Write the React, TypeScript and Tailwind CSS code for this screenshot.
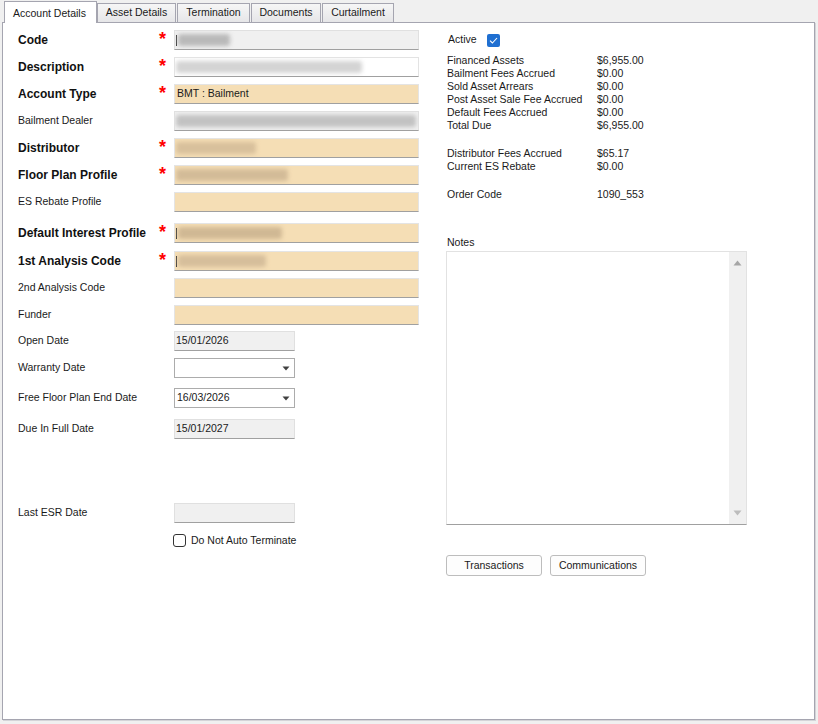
import React from 'react'

// Account details tab of the floor plan account form

type Field = {
  label: string
  bold?: boolean
  required?: boolean
  gap: string
  kind: 'grey' | 'white' | 'beige'
  text?: string
  blur?: { w: string; color: string }
  tick?: boolean
}

const fields: Field[] = [
  { label: 'Code', bold: true, required: true, gap: 'mt-0', kind: 'grey', blur: { w: 'w-[52px]', color: 'bg-[#b9b9b9]' }, tick: true },
  { label: 'Description', bold: true, required: true, gap: 'mt-[7px]', kind: 'white', blur: { w: 'w-[186px]', color: 'bg-[#d4d4d4]' } },
  { label: 'Account Type', bold: true, required: true, gap: 'mt-[7px]', kind: 'beige', text: 'BMT : Bailment' },
  { label: 'Bailment Dealer', gap: 'mt-[7px]', kind: 'grey', blur: { w: 'w-[240px]', color: 'bg-[#c2c2c2]' } },
  { label: 'Distributor', bold: true, required: true, gap: 'mt-[7px]', kind: 'beige', blur: { w: 'w-[80px]', color: 'bg-[#d8c09c]' } },
  { label: 'Floor Plan Profile', bold: true, required: true, gap: 'mt-[7px]', kind: 'beige', blur: { w: 'w-[112px]', color: 'bg-[#d3bb98]' } },
  { label: 'ES Rebate Profile', gap: 'mt-[7px]', kind: 'beige' },
  { label: 'Default Interest Profile', bold: true, required: true, gap: 'mt-[11px]', kind: 'beige', blur: { w: 'w-[104px]', color: 'bg-[#d0b894]' }, tick: true },
  { label: '1st Analysis Code', bold: true, required: true, gap: 'mt-[8px]', kind: 'beige', blur: { w: 'w-[88px]', color: 'bg-[#d6be9b]' }, tick: true },
  { label: '2nd Analysis Code', gap: 'mt-[7px]', kind: 'beige' },
  { label: 'Funder', gap: 'mt-[7px]', kind: 'beige' },
]

const kindClass = {
  grey: 'bg-[#f0f0f0] border-[#e0e0e0] border-b-[#a0a0a0]',
  white: 'bg-white border-[#e3e3e3] border-b-[#a0a0a0]',
  beige: 'bg-[#f5deb5] border-[#e4e4e4] border-b-[#a0a0a0]',
}

function DropArrow() {
  return (
    <svg width="8" height="5" viewBox="0 0 8 5" className="mr-[4px]">
      <path d="M0.5 0.5 L7.5 0.5 L4 4.5 Z" fill="#404040" />
    </svg>
  )
}

function DateBox({ value, kind }: { value?: string; kind: 'ro' | 'combo' }) {
  if (kind === 'combo') {
    return (
      <div className="w-[121px] h-[20px] bg-white border border-[#acacac] flex items-center justify-between pl-[2px]">
        <span>{value ?? ''}</span>
        <DropArrow />
      </div>
    )
  }
  return (
    <div className="w-[121px] h-[20px] bg-[#f0f0f0] border border-[#e0e0e0] border-b-[#a0a0a0] flex items-center pl-[1px]">
      {value}
    </div>
  )
}

function Label({ text, bold, required }: { text: string; bold?: boolean; required?: boolean }) {
  return (
    <>
      <div className={`w-[139px] self-center ${bold ? 'font-bold text-[12px] text-[#111]' : ''}`}>{text}</div>
      <div className="w-[17px] h-full pl-[2px] pt-[2px]">
        {required && <span className="text-[#ff0000] font-bold text-[18px] leading-[14px]">*</span>}
      </div>
    </>
  )
}

export default function App() {
  return (
    <div className="w-[818px] h-[724px] bg-[#f0f0f0] flex flex-col font-['Liberation_Sans',Arial,sans-serif] text-[10.5px] text-[#1a1a1a]">
      {/* tab strip */}
      <div className="flex h-[23px] pl-[4px] items-end relative z-10">
        <div className="w-[93px] h-[22px] bg-white border border-b-0 border-[#a5a5b0] pl-[8px] pt-[4px]">Account Details</div>
        <div className="w-[79px] h-[19px] mb-[1px] bg-linear-to-b from-[#f6f6f6] to-[#e6e6e8] border border-b-0 border-[#a5a5b0] flex items-center justify-center">Asset Details</div>
        <div className="ml-px w-[73px] h-[19px] mb-[1px] bg-linear-to-b from-[#f6f6f6] to-[#e6e6e8] border border-b-0 border-[#a5a5b0] flex items-center justify-center">Termination</div>
        <div className="ml-px w-[70px] h-[19px] mb-[1px] bg-linear-to-b from-[#f6f6f6] to-[#e6e6e8] border border-b-0 border-[#a5a5b0] flex items-center justify-center">Documents</div>
        <div className="ml-px w-[72px] h-[19px] mb-[1px] bg-linear-to-b from-[#f6f6f6] to-[#e6e6e8] border border-b-0 border-[#a5a5b0] flex items-center justify-center">Curtailment</div>
      </div>

      {/* panel */}
      <div className="-mt-px ml-[2px] w-[813px] h-[698px] bg-white border border-[#a5a5b0] shadow-[1px_1px_0_#d4d4d8] flex">
        {/* left column */}
        <div className="pl-[15px] pt-[7px] flex flex-col w-[443px]">
          {fields.map((f) => (
            <div key={f.label} className={`${f.gap} flex h-[20px]`}>
              <Label text={f.label} bold={f.bold} required={f.required} />
              <div className={`w-[245px] h-[20px] border ${kindClass[f.kind]} flex items-center pl-[1px] overflow-hidden`}>
                {f.text && <span className="pl-[1px]">{f.text}</span>}
                {f.tick && <span className="w-px h-[11px] bg-[#333] mr-[1px]" />}
                {f.blur && <span className={`${f.blur.w} h-[12px] ${f.blur.color} blur-[2px] rounded-[3px]`} />}
              </div>
            </div>
          ))}

          <div className="mt-[6px] flex h-[20px]">
            <Label text="Open Date" />
            <DateBox kind="ro" value="15/01/2026" />
          </div>
          <div className="mt-[7px] flex h-[20px]">
            <Label text="Warranty Date" />
            <DateBox kind="combo" />
          </div>
          <div className="mt-[10px] flex h-[20px]">
            <Label text="Free Floor Plan End Date" />
            <DateBox kind="combo" value="16/03/2026" />
          </div>
          <div className="mt-[11px] flex h-[20px]">
            <Label text="Due In Full Date" />
            <DateBox kind="ro" value="15/01/2027" />
          </div>
          <div className="mt-[64px] flex h-[20px]">
            <Label text="Last ESR Date" />
            <DateBox kind="ro" />
          </div>
          <div className="mt-[10px] pl-[155px] flex items-center gap-[5px]">
            <span className="w-[13px] h-[13px] border border-[#333] rounded-[3px] bg-white" />
            <span>Do Not Auto Terminate</span>
          </div>
        </div>

        {/* right column */}
        <div className="flex flex-col pt-[10px] w-[302px]">
          <div className="flex items-center h-[14px] pl-[2px]">
            <span className="w-[39px]">Active</span>
            <span className="w-[13px] h-[13px] rounded-[2px] bg-[#1f6fd1] flex items-center justify-center">
              <svg width="9" height="7" viewBox="0 0 9 7">
                <path d="M1 3.6 L3.4 6 L8 1" stroke="white" strokeWidth="1.1" fill="none" />
              </svg>
            </span>
          </div>

          <div className="mt-[7px] leading-[13px] pl-[1px]">
            {[
              ['Financed Assets', '$6,955.00'],
              ['Bailment Fees Accrued', '$0.00'],
              ['Sold Asset Arrears', '$0.00'],
              ['Post Asset Sale Fee Accrued', '$0.00'],
              ['Default Fees Accrued', '$0.00'],
              ['Total Due', '$6,955.00'],
            ].map(([k, v]) => (
              <div key={k} className="flex">
                <span className="w-[150px]">{k}</span>
                <span>{v}</span>
              </div>
            ))}
          </div>

          <div className="mt-[15px] leading-[13px] pl-[1px]">
            <div className="flex">
              <span className="w-[150px]">Distributor Fees Accrued</span>
              <span>$65.17</span>
            </div>
            <div className="flex">
              <span className="w-[150px]">Current ES Rebate</span>
              <span>$0.00</span>
            </div>
          </div>

          <div className="mt-[15px] leading-[13px] pl-[1px] flex">
            <span className="w-[150px]">Order Code</span>
            <span>1090_553</span>
          </div>

          <div className="mt-[35px] leading-[13px] pl-[1px]">Notes</div>

          <div className="mt-[2px] w-[301px] h-[274px] border border-[#e2e2e2] border-b-[#a0a0a0] flex justify-end">
            <div className="w-[17px] h-full bg-[#f0f0f0] flex flex-col items-center justify-between py-[8px]">
              <svg width="9" height="6" viewBox="0 0 9 6">
                <path d="M0.5 5.5 L4.5 0.5 L8.5 5.5 Z" fill="#a6a6a6" />
              </svg>
              <svg width="9" height="6" viewBox="0 0 9 6">
                <path d="M0.5 0.5 L4.5 5.5 L8.5 0.5 Z" fill="#bcbcbc" />
              </svg>
            </div>
          </div>

          <div className="mt-[30px] flex gap-[8px]">
            <button className="w-[96px] h-[21px] bg-[#fdfdfd] border border-[#bdbdbd] rounded-[3px] text-[10.5px]">Transactions</button>
            <button className="w-[96px] h-[21px] bg-[#fdfdfd] border border-[#bdbdbd] rounded-[3px] text-[10.5px]">Communications</button>
          </div>
        </div>
      </div>
    </div>
  )
}
